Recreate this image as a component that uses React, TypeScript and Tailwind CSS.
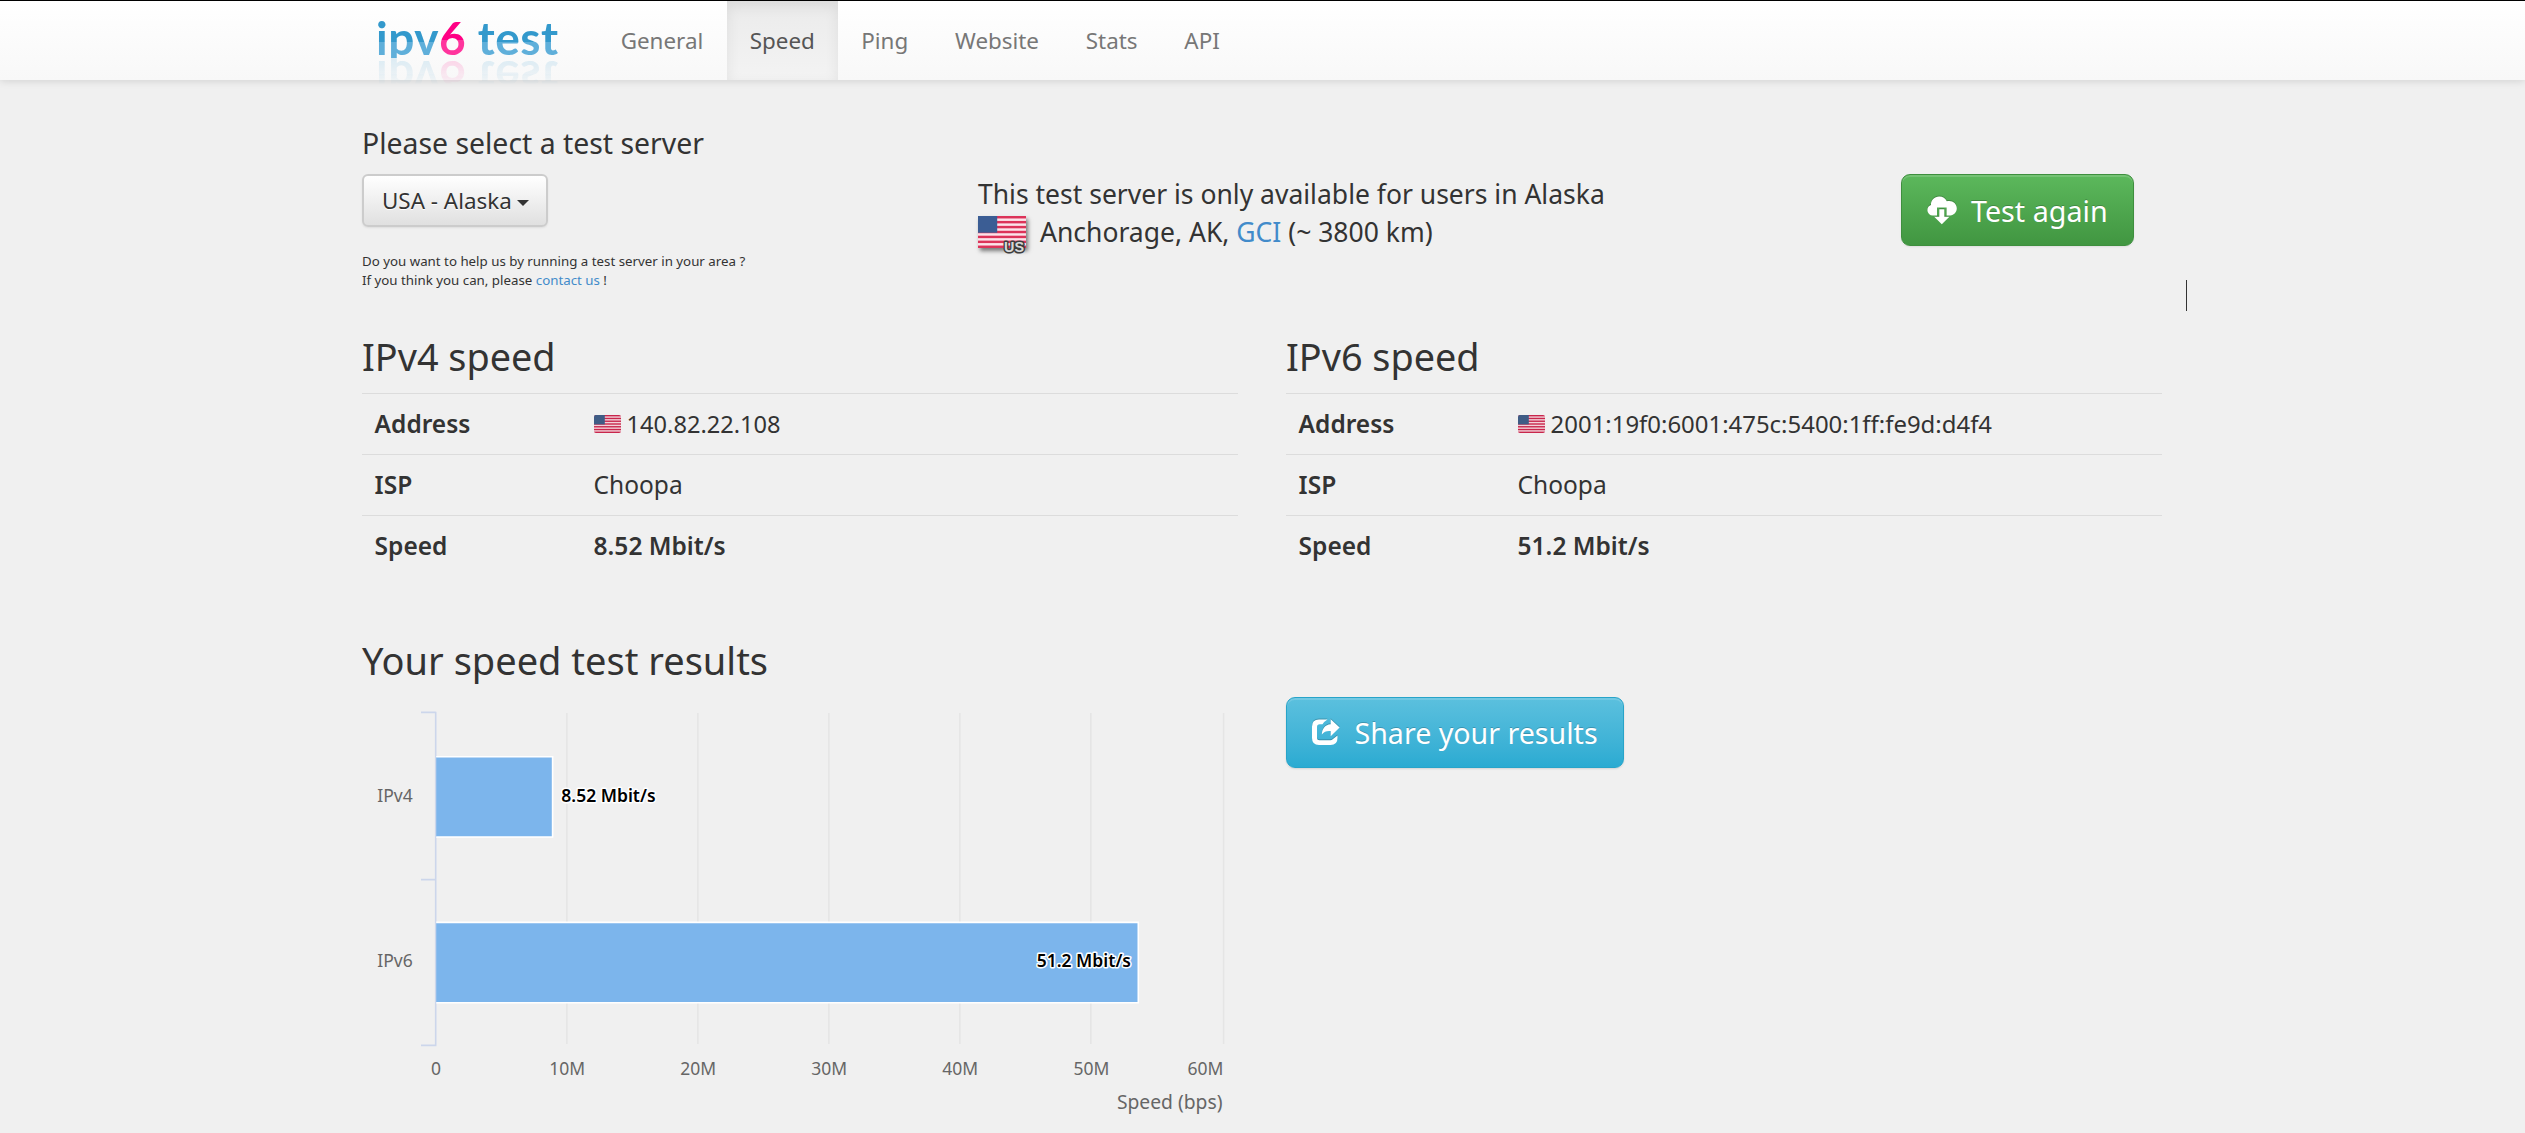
import React from "react";

const navItems = ["General", "Speed", "Ping", "Website", "Stats", "API"];

function Logo() {
  return (
    <svg
      className="block h-[58px] w-[186px] [-webkit-box-reflect:below_0px_linear-gradient(to_bottom,transparent_55%,rgba(0,0,0,0.04)_60%,rgba(0,0,0,0.2)_100%)]"
      viewBox="0 0 186 58"
    >
      <defs>
        <linearGradient id="blue" gradientUnits="userSpaceOnUse" x1="0" x2="0" y1="0" y2="80">
          <stop offset="0.53" stopColor="#3399cc" />
          <stop offset="0.53" stopColor="#5fafda" />
        </linearGradient>
        <linearGradient id="pink" gradientUnits="userSpaceOnUse" x1="0" x2="0" y1="0" y2="80">
          <stop offset="0.5" stopColor="#ff0084" />
          <stop offset="0.5" stopColor="#ff359d" />
        </linearGradient>
      </defs>
      <text x="1" y="54.5" fontFamily="Lato" fontWeight="700" fontSize="46" textLength="182" fill="url(#blue)">
        ipv<tspan fill="url(#pink)">6</tspan> test
      </text>
    </svg>
  );
}

function FlagStripes({ red, pale, blue }: { red: string; pale: string; blue: string }) {
  return (
    <>
      <rect width="39" height="26" fill={pale} />
      {[0, 1, 2, 3, 4, 5, 6].map((i) => (
        <rect key={i} y={i * 4} width="39" height="2" fill={red} />
      ))}
      <rect width="15.6" height="13.6" fill={blue} />
    </>
  );
}

function SmallFlag() {
  return (
    <svg className="h-[18px] w-[27px] rounded-[2px]" viewBox="0 0 39 26" preserveAspectRatio="none">
      <FlagStripes red="#c8264c" pale="#f2d3da" blue="#3f5c85" />
    </svg>
  );
}

function LargeFlag() {
  return (
    <span className="relative mr-[14px] mt-[3px] block h-[32px] w-[48px]">
      <svg className="h-[32px] w-[48px] shadow-[2px_3px_4px_rgba(0,0,0,0.5)]" viewBox="0 0 39 26" preserveAspectRatio="none">
        <FlagStripes red="#dc3359" pale="#fbe4ea" blue="#3b5d94" />
      </svg>
      <svg className="absolute left-[24px] top-[20px] h-[20px] w-[30px]" viewBox="0 0 30 20">
        <text x="2" y="16.2" fontFamily="Liberation Sans" fontWeight="700" fontSize="15.5" textLength="20" lengthAdjust="spacingAndGlyphs" fill="#d8d8d8" stroke="#3d3d3d" strokeWidth="3" strokeLinejoin="round" paintOrder="stroke">
          US
        </text>
      </svg>
    </span>
  );
}

function CloudDownloadIcon() {
  return (
    <svg className="h-[30px] w-[30px] drop-shadow-[0_-1px_0_rgba(0,0,0,0.2)]" viewBox="0 0 30 30" fill="#fff">
      <path d="M5.8 20.5A5.4 5.4 0 0 1 0.4 15.2C0.4 12.4 2 10.6 4 10C3.6 5.4 7.6 1.5 12.2 1.5C15.8 1.5 18.4 3.2 19.8 6.3C25 4.8 29.8 8.4 29.8 13.2C29.8 17 27 20 23.2 20.5H19.6V12.4H10V20.5Z" />
      <path d="M12.3 14.2H17.3V21.8H22.4L14.8 29.2L7.2 21.8H12.3Z" />
    </svg>
  );
}

function ShareIcon() {
  return (
    <svg className="-mt-px h-[28px] w-[30px] drop-shadow-[0_-1px_0_rgba(0,0,0,0.2)]" viewBox="0 0 30 28" fill="#fff">
      <path d="M16.5 1.5H8Q1 1.5 1 8.5V20Q1 27 8 27H19.5Q26.5 27 26.5 20V17.5L21.4 21.5Q20.8 22.2 19.5 22.2H8.5Q6 22.2 6 19.7V9Q6 6.3 8.7 6.3H11.5Q13.5 3.2 16.5 1.5Z" />
      <path d="M19.7 1.2L28.6 9.6L19.7 18.2V13.1C15.6 12.8 13.1 13.6 10.8 16.6C11.2 10.3 14.2 6.8 19.7 6.3Z" />
    </svg>
  );
}

function ResultTable({ title, address, addressClass, speed }: { title: string; address: string; addressClass: string; speed: string }) {
  const row = "flex h-[61px] items-center border-t border-[#dcdcdc] pl-[12.6px]";
  const label = "w-[219px] font-semibold";
  return (
    <section className="w-[876px]">
      <h3 className="mb-[15px] pt-px text-[37.8px] leading-[42px]">{title}</h3>
      <div className="text-[24.5px] leading-[34px]">
        <div className={row}>
          <div className={label}>Address</div>
          <SmallFlag />
          <span className={addressClass}>{address}</span>
        </div>
        <div className={row}>
          <div className={label}>ISP</div>
          <div>Choopa</div>
        </div>
        <div className={row}>
          <div className={label}>Speed</div>
          <div className="font-semibold">{speed}</div>
        </div>
      </div>
    </section>
  );
}

function SpeedChart() {
  const grid = [204.9, 335.9, 466.9, 597.9, 728.8, 861.6];
  const ticks: [number, string][] = [[74, "0"], [205.3, "10M"], [336.3, "20M"], [467.3, "30M"], [598.3, "40M"], [729.5, "50M"]];
  return (
    <svg className="block h-[436px] w-[877px]" viewBox="0 0 877 436" fontFamily="Noto Sans" fontSize="17.5">
      {grid.map((x) => (
        <line key={x} x1={x} x2={x} y1="16" y2="347" stroke="#e5e5e5" strokeWidth="1.6" />
      ))}
      <path d="M59 15.4H73.7M59 182.6H73.7M59 348.4H74.4M73.7 14.8V348.6" fill="none" stroke="#ccd6eb" strokeWidth="1.6" />
      <path d="M74.2 59.8H190.6V140H74.2" fill="#7cb5ec" stroke="#fff" strokeWidth="1.6" />
      <path d="M74.2 225.4H776.3V305.8H74.2" fill="#7cb5ec" stroke="#fff" strokeWidth="1.6" />
      <g fill="#666">
        <text x="50.7" y="105.3" textAnchor="end">IPv4</text>
        <text x="50.7" y="270.3" textAnchor="end">IPv6</text>
        {ticks.map(([x, label]) => (
          <text key={label} x={x} y="378.4" textAnchor="middle">{label}</text>
        ))}
        <text x="861.5" y="378.4" textAnchor="end">60M</text>
        <text x="860.5" y="412.4" fontSize="19.3" textAnchor="end">Speed (bps)</text>
      </g>
      <g fill="#000" fontWeight="600" stroke="#fff" strokeWidth="3" strokeLinejoin="round" paintOrder="stroke">
        <text x="199.3" y="105.3">8.52 Mbit/s</text>
        <text x="769" y="270.3" textAnchor="end">51.2 Mbit/s</text>
      </g>
    </svg>
  );
}

export default function App() {
  return (
    <div className="relative h-[1133px] w-[2525px] overflow-hidden bg-[#f0f0f0] font-['Noto_Sans',sans-serif] text-[#333]">
      <header className="flex h-[80px] border-t border-black bg-linear-to-b from-white to-[#f8f8f8] pl-[375px] shadow-[0_1px_8px_rgba(0,0,0,0.13)]">
        <div className="-mt-px h-[80px] w-[222.3px]">
          <Logo />
        </div>
        <nav className="flex text-[22.4px] text-[#777]">
          {navItems.map((item) => (
            <a
              key={item}
              className={
                item === "Speed"
                  ? "flex items-center bg-linear-to-b from-[#ebebeb] to-[#f3f3f3] px-[23.1px] text-[#555] shadow-[inset_0_5px_14px_rgba(0,0,0,0.075)]"
                  : "flex items-center px-[23.4px]"
              }
            >
              {item}
            </a>
          ))}
        </nav>
      </header>

      <main className="ml-[362px] w-[1800px]">
        <div className="flex h-[255px] pt-[43px]">
          <div className="w-[616px]">
            <h4 className="mb-[11px] text-[28.4px] leading-[40px]">Please select a test server</h4>
            <button className="flex h-[53px] w-[186px] items-center rounded-[6px] border-2 border-[#ccc] bg-linear-to-b from-white to-[#e0e0e0] pl-[18px] text-[22.4px] shadow-[0_1px_2px_rgba(0,0,0,0.075)] [text-shadow:0_1px_0_#fff]">
              USA - Alaska
              <span className="ml-[5px] mt-[5px] border-x-[6px] border-t-[6px] border-x-transparent border-t-[#333]" />
            </button>
            <p className="mt-[25px] text-[13.3px] leading-[19px]">
              Do you want to help us by running a test server in your area ?<br />
              If you think you can, please <a className="text-[#428bca]">contact us</a> !
            </p>
          </div>
          <div className="w-[923px] pt-[52px] text-[26.5px] leading-[38px]">
            <p>This test server is only available for users in Alaska</p>
            <div className="-mt-px flex h-[38px] items-start pt-px">
              <LargeFlag />
              <span>Anchorage, AK, <a className="text-[#428bca]">GCI</a> (~ 3800 km)</span>
            </div>
          </div>
          <div className="pt-[51px]">
            <button className="flex h-[72px] w-[233px] items-center rounded-[9px] border border-[#3e8f3e] bg-linear-to-b from-[#5cb85c] to-[#419641] pl-[25px] text-[28.7px] text-white shadow-[inset_0_2px_0_rgba(255,255,255,0.15),0_1px_2px_rgba(0,0,0,0.075)] [text-shadow:0_-1px_0_rgba(0,0,0,0.2)]">
              <CloudDownloadIcon />
              <span className="ml-[14px] pt-px">Test again</span>
            </button>
          </div>
        </div>

        <div className="flex h-[304px] gap-[48px]">
          <ResultTable title="IPv4 speed" address="140.82.22.108" addressClass="ml-[6px] text-[23.6px]" speed="8.52 Mbit/s" />
          <ResultTable title="IPv6 speed" address="2001:19f0:6001:475c:5400:1ff:fe9d:d4f4" addressClass="ml-[6px] text-[23.93px]" speed="51.2 Mbit/s" />
        </div>

        <div className="flex gap-[47px]">
          <section className="w-[877px]">
            <h3 className="mb-[16px] text-[38px] leading-[42px]">Your speed test results</h3>
            <SpeedChart />
          </section>
          <div className="pt-[58px]">
            <button className="flex h-[71px] w-[338px] items-center rounded-[9px] border border-[#28a4c9] bg-linear-to-b from-[#5bc0de] to-[#2aabd2] pl-[24px] text-[28.6px] text-white shadow-[inset_0_2px_0_rgba(255,255,255,0.15),0_1px_2px_rgba(0,0,0,0.12)] [text-shadow:0_-1px_0_rgba(0,0,0,0.2)]">
              <ShareIcon />
              <span className="ml-[13.5px] pt-[2px]">Share your results</span>
            </button>
          </div>
        </div>
      </main>

      <span className="absolute left-[2186px] top-[280px] h-[31px] w-px bg-[#333]" />
    </div>
  );
}
